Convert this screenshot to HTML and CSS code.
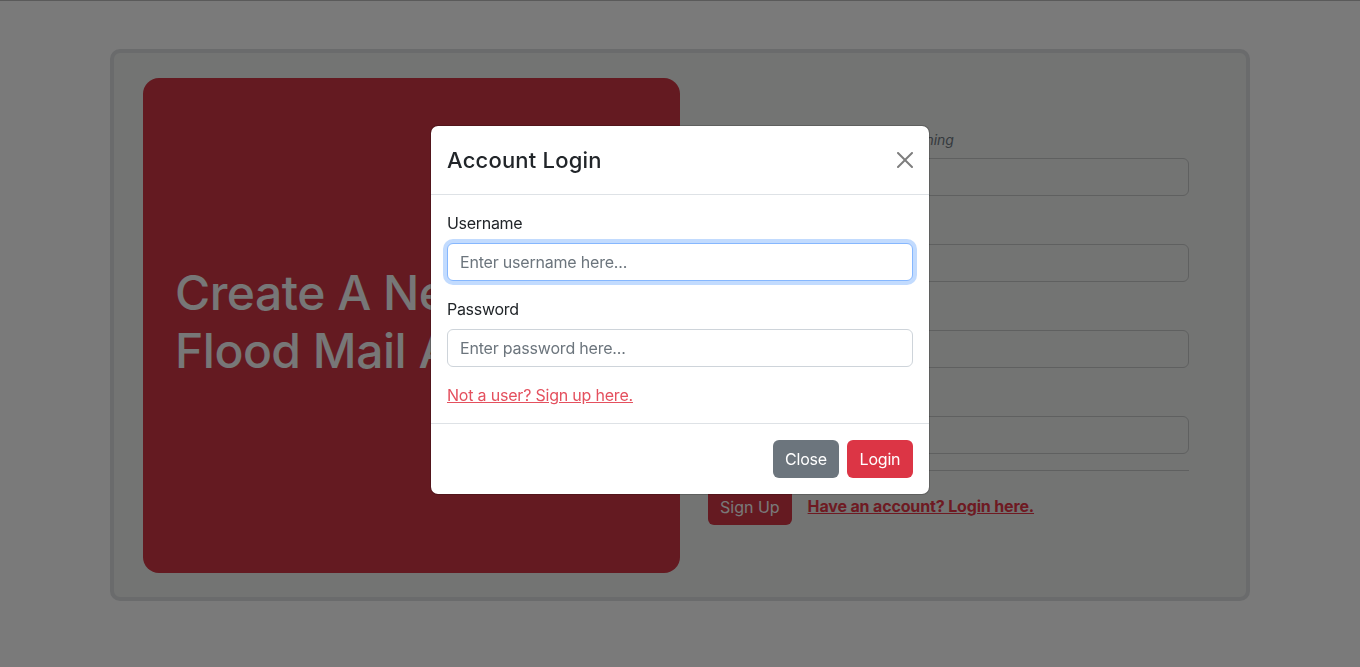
FILE: index.html
```html
<!DOCTYPE html>
<html lang="en">
<head>
<meta charset="utf-8">
<title>Flood Mail - Sign Up</title>
<link rel="stylesheet" href="styles.css">
</head>
<body>
<div class="page">
  <main class="panel">
    <section class="hero">
      <h1 class="hero-title">Create A New<br>Flood Mail Account</h1>
    </section>
    <form class="signup">
      <p class="note">Sign up to get an early flood warning</p>
      <input class="field" type="text">
      <label class="label">Email</label>
      <input class="field" type="email">
      <label class="label">Username</label>
      <input class="field" type="text">
      <label class="label">Password</label>
      <input class="field" type="password">
      <hr class="rule">
      <div class="actions">
        <button class="btn-signup" type="button">Sign Up</button>
        <a class="login-link" href="#">Have an account? Login here.</a>
      </div>
    </form>
  </main>
</div>

<div class="backdrop"></div>

<div class="modal">
  <div class="dialog">
    <div class="modal-header">
      <h4 class="modal-title">Account Login</h4>
      <button class="btn-close" type="button" aria-label="Close">
        <svg viewBox="0 0 16 16" width="16" height="16"><path d="M.293.293a1 1 0 0 1 1.414 0L8 6.586 14.293.293a1 1 0 1 1 1.414 1.414L9.414 8l6.293 6.293a1 1 0 0 1-1.414 1.414L8 9.414l-6.293 6.293a1 1 0 0 1-1.414-1.414L6.586 8 .293 1.707a1 1 0 0 1 0-1.414z"/></svg>
      </button>
    </div>
    <div class="modal-body">
      <label class="m-label">Username</label>
      <input class="m-input focused" type="text" placeholder="Enter username here...">
      <label class="m-label">Password</label>
      <input class="m-input" type="password" placeholder="Enter password here...">
      <a class="signup-link" href="#">Not a user? Sign up here.</a>
    </div>
    <div class="modal-footer">
      <button class="btn btn-grey" type="button">Close</button>
      <button class="btn btn-red" type="button">Login</button>
    </div>
  </div>
</div>
</body>
</html>
```

FILE: styles.css
```css
* { box-sizing: border-box; }

html, body {
  margin: 0;
  height: 100%;
}

body {
  font-family: Inter, "Noto Sans", "Liberation Sans", sans-serif;
  font-size: 16px;
  line-height: 1.5;
  color: #212529;
  background: #f4f4f4;
  border-top: 1px solid #b4b4b4;
  overflow: hidden;
}

.page {
  padding-top: 48px;
}

.panel {
  width: 1140px;
  margin: 0 auto;
  border: 4px solid #d4d6d8;
  border-radius: 10px;
  background: #e6e8e6;
  padding: 25px 57px 24px 29px;
  display: flex;
  gap: 28px;
}

.hero {
  width: 537px;
  height: 495px;
  background: #c83442;
  border-radius: 16px;
  padding: 0 32px;
  display: flex;
  flex-direction: column;
  justify-content: center;
}

.hero-title {
  margin: 0 0 8px;
  font-size: 48px;
  font-weight: 500;
  line-height: 1.2;
  color: #eeeeee;
  letter-spacing: -0.5px;
}

.signup {
  width: 481px;
  padding-top: 51px;
  display: flex;
  flex-direction: column;
}

.note {
  margin: 0 0 8px;
  font-size: 14px;
  line-height: 21px;
  font-style: italic;
  color: #6c757d;
}

.label {
  display: block;
  margin: 16px 0 8px;
  line-height: 24px;
}

.field {
  display: block;
  width: 100%;
  height: 38px;
  border: 1px solid #bec0c0;
  border-radius: 6px;
  background: transparent;
  font: inherit;
}

.rule {
  margin: 16px 0;
  border: 0;
  border-top: 1px solid #bec0c0;
}

.actions {
  display: flex;
  align-items: center;
  gap: 16px;
}

.btn-signup {
  height: 37px;
  padding: 0 12px;
  border: 0;
  border-radius: 6px;
  background: #ca3442;
  color: #f2f2f2;
  font: inherit;
  font-size: 16px;
  margin-top: 1px;
}

.login-link {
  color: #dc3545;
  font-weight: 700;
  text-decoration: underline;
  letter-spacing: -0.15px;
}

.backdrop {
  position: fixed;
  inset: 0;
  background: rgba(0, 0, 0, 0.5);
}

.modal {
  position: fixed;
  inset: 0;
}

.dialog {
  width: 500px;
  margin: 125px auto 0;
  background: #fff;
  border: 1px solid rgba(0, 0, 0, 0.175);
  border-radius: 8px;
  background-clip: padding-box;
}

.modal-header {
  display: flex;
  align-items: center;
  justify-content: space-between;
  padding: 16px;
  border-bottom: 1px solid #dee2e6;
}

.modal-title {
  margin: 0;
  font-size: 22px;
  font-weight: 500;
  line-height: 36px;
  color: #212529;
  letter-spacing: 0.2px;
}

.btn-close {
  width: 24px;
  height: 24px;
  padding: 4px;
  margin-right: -4px;
  border: 0;
  background: transparent;
  display: flex;
  align-items: center;
  justify-content: center;
}

.btn-close svg {
  fill: #000;
  opacity: 0.5;
  display: block;
}

.modal-body {
  padding: 16px;
  display: flex;
  flex-direction: column;
}

.m-label {
  display: block;
  line-height: 24px;
  margin-bottom: 8px;
  letter-spacing: -0.3px;
}

.m-input {
  display: block;
  width: 100%;
  height: 38px;
  padding: 6px 12px;
  margin-bottom: 16px;
  border: 1px solid #ced4da;
  border-radius: 6px;
  font: inherit;
  letter-spacing: -0.2px;
  color: #212529;
  background: #fff;
  outline: none;
}

.m-input::placeholder {
  color: #6c757d;
}

.m-input.focused {
  border-color: #86b7fe;
  box-shadow: 0 0 0 4px rgba(13, 110, 253, 0.25);
}

.signup-link {
  align-self: flex-start;
  line-height: 24px;
  color: #e4505e;
  text-decoration: underline;
  letter-spacing: -0.2px;
}

.modal-footer {
  display: flex;
  justify-content: flex-end;
  align-items: center;
  padding: 12px;
  border-top: 1px solid #dee2e6;
}

.btn {
  height: 38px;
  width: 66px;
  margin: 4px;
  border: 0;
  border-radius: 6px;
  color: #fff;
  font: inherit;
  letter-spacing: -0.2px;
}

.btn-grey { background: #6c757d; }
.btn-red { background: #dc3545; }
```
